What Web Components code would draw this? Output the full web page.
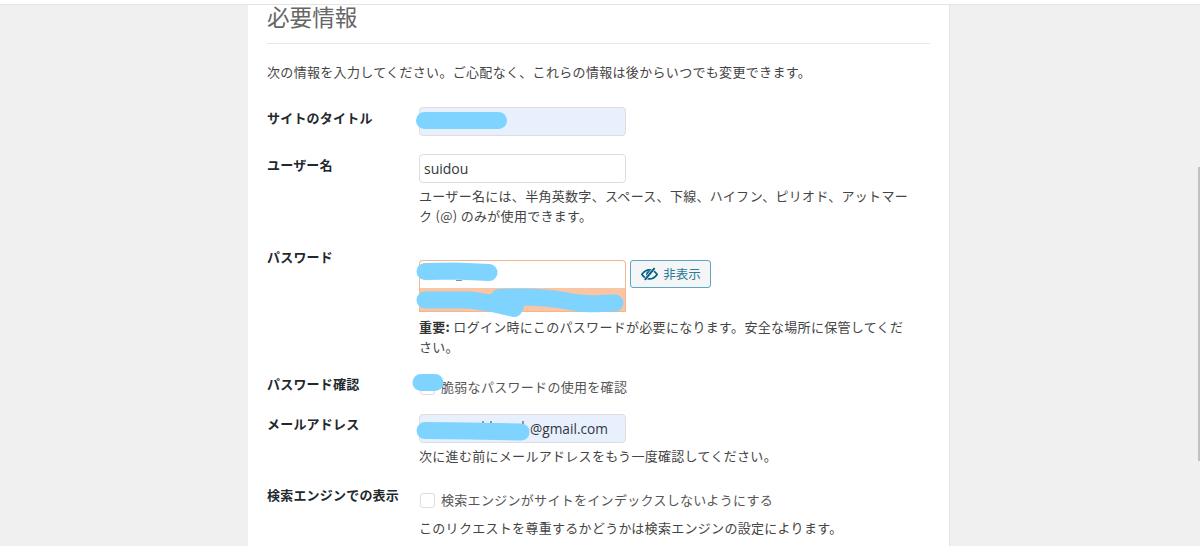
<!DOCTYPE html>
<html lang="ja"><head><meta charset="utf-8">
<style>
html,body{margin:0;height:546px;overflow:hidden;background:#f0f0f0}
body{font-family:"Noto Sans CJK JP","Open Sans",sans-serif;font-size:13px;color:#444;position:relative}
</style></head><body>
<template id="t-card"><style>
:host{display:block;width:701px;height:542px;margin-left:248px;background:#fff;border-right:1px solid #e4e4e4}
.in{padding:0 19px}
h1{margin:0;font-size:22.6px;font-weight:400;color:#666;line-height:23px;padding-top:1px;height:38px;border-bottom:1px solid #e8e8e8;width:663px}
p{margin:0;padding-top:18px;height:45px;line-height:19px;letter-spacing:.32px}
</style><div class="in"><h1>必要情報</h1><p>次の情報を入力してください。ご心配なく、これらの情報は後からいつでも変更できます。</p><slot></slot></div></template>

<template id="t-row"><style>
:host{display:grid;grid-template-columns:152px 1fr;align-items:start}
.l{font-weight:700;color:#23282d;line-height:20px;letter-spacing:.2px}
.c{width:494px;min-width:0}
</style><div class="l"><slot name="label"></slot></div><div class="c"><slot></slot></div></template>

<template id="t-field"><style>
:host{display:block;box-sizing:border-box;width:207px;height:29px;border:1px solid #ddd;border-radius:4px;background:#fff;padding:0 4px;font:14px/27px "Open Sans","Noto Sans CJK JP",sans-serif;color:#32373c;white-space:nowrap;overflow:hidden}
:host([fill]){background:#e8f0fe}
</style><slot></slot></template>

<template id="t-desc"><style>
:host{display:block;line-height:20px;letter-spacing:.3px;color:#444}
</style><slot></slot></template>

<template id="t-check"><style>
:host{display:flex;align-items:center;line-height:20px;letter-spacing:.3px;color:#555}
i{display:block;box-sizing:border-box;width:15px;height:15px;border:1px solid #ddd;border-radius:3px;background:#fff;margin:0 6px 0 1px;flex:none}
</style><i></i><slot></slot></template>

<template id="t-pass"><style>
:host{display:grid;grid-template-columns:207px auto;column-gap:4px;justify-content:start}
.b{box-sizing:border-box;width:207px;height:28px;border:1px solid #f5b58f;border-bottom:0;border-radius:4px 4px 0 0;background:#fff}
.s{grid-column:1;height:24px;background:#fbc4a3;border:1px solid #f5b58f;border-top:0;box-sizing:border-box}
button{grid-column:2;grid-row:1;box-sizing:border-box;width:81px;height:28px;border:1px solid #5fa5bd;border-radius:3px;background:#f3f5f6;color:#2b7a9a;font:12.5px/26px "Noto Sans CJK JP",sans-serif;padding:0 0 0 1px;display:flex;align-items:center;justify-content:center;gap:5px}
svg{width:17px;height:14px;flex:none}
</style><div class="b"></div>
<button><svg viewBox="0 0 20 16"><path d="M1 8.500C3.600 5 6.500 3.200 10 3.200s6.400 1.800 9 5.300c-2.600 3.500-5.500 5.300-9 5.300s-6.400-1.800-9-5.300z" fill="none" stroke="#016087" stroke-width="2"/><path d="M10 4.500a4 4 0 0 0-4 4c0 1.500.8 2.800 2 3.500l5-6a4 4 0 0 0-3-1.500z" fill="#016087"/><path d="M16 1 4.500 15" stroke="#fff" stroke-width="3.600"/><path d="M16 1 4.500 15" stroke="#016087" stroke-width="2.400"/></svg>非表示</button>
<div class="s"></div></template>

<template id="t-scribble"><style>
:host{display:block;position:absolute;left:0;top:0;width:1200px;height:546px;pointer-events:none}
svg{display:block}
</style><svg width="1200" height="546" viewBox="0 0 1200 546">
<path d="M456 280.500h6" stroke="#8a8f98" stroke-width="1"/>
<path d="M483 421v5M491 421v4M523 421v5" stroke="#555" stroke-width="1.200"/>
<g fill="none" stroke="#7fd3ff" stroke-linecap="round" stroke-linejoin="round">
<path d="M424.500 120.500L498.500 120.500" stroke-width="17"/>
<path d="M425 271.500L455 271L478 272L489 272.500" stroke-width="17"/>
<path d="M425 300L470 300L490 303L514 308.500" stroke-width="17"/>
<path d="M499 297.500C530 296 555 298 575 302.500C590 305 600 303 615 303" stroke-width="17"/>
<path d="M491 302L516 306" stroke-width="16"/>
<path d="M421 382.500L435 382.500" stroke-width="17"/>
<path d="M425 430.500L470 431L521 432" stroke-width="17"/>
</g></svg></template>

<template id="t-scroll"><style>
:host{display:block;position:absolute;right:0;top:167px;width:2px;height:294px;background:#c1c1c1}
</style></template>

<template id="t-top"><style>
:host{display:block;height:4px;background:#fff;border-bottom:1px solid #e4e4e4;margin-bottom:-1px;position:relative}
</style></template>

<script>
for (const [n,t] of [['wp-card','t-card'],['wp-row','t-row'],['wp-field','t-field'],['wp-desc','t-desc'],['wp-check','t-check'],['wp-pass','t-pass'],['wp-scribble','t-scribble'],['wp-scroll','t-scroll'],['wp-top','t-top']]) {
  customElements.define(n, class extends HTMLElement {
    constructor(){super();this.attachShadow({mode:'open'}).appendChild(document.getElementById(t).content.cloneNode(true));}
  });
}
</script>

<wp-top></wp-top>
<wp-card>
  <wp-row style="height:47px"><span slot="label" style="display:block;padding-top:1px">サイトのタイトル</span><wp-field fill></wp-field></wp-row>
  <wp-row style="height:106px"><span slot="label" style="display:block;margin-top:1px">ユーザー名</span><wp-field>suidou</wp-field><wp-desc style="margin-top:3px">ユーザー名には、半角英数字、スペース、下線、ハイフン、ピリオド、アットマーク (@) のみが使用できます。</wp-desc></wp-row>
  <wp-row style="height:113px"><span slot="label" style="display:block;margin-top:-13px">パスワード</span><wp-pass></wp-pass><wp-desc style="margin-top:5px"><b style="color:#333">重要:</b> ログイン時にこのパスワードが必要になります。安全な場所に保管してください。</wp-desc></wp-row>
  <wp-row style="height:41px"><span slot="label" style="display:block;margin-top:1px">パスワード確認</span><wp-check style="padding-top:4px">脆弱なパスワードの使用を確認</wp-check></wp-row>
  <wp-row style="height:75px"><span slot="label" style="display:block">メールアドレス</span><wp-field fill><span style="padding-left:106px;font-size:13.7px">@gmail.com</span></wp-field><wp-desc style="margin-top:3px">次に進む前にメールアドレスをもう一度確認してください。</wp-desc></wp-row>
  <wp-row><span slot="label" style="display:block;margin-top:-4px">検索エンジンでの表示</span><wp-check style="margin-top:1px">検索エンジンがサイトをインデックスしないようにする</wp-check><wp-desc style="margin-top:8px">このリクエストを尊重するかどうかは検索エンジンの設定によります。</wp-desc></wp-row>
</wp-card>
<wp-scribble></wp-scribble>
<wp-scroll></wp-scroll>
</body></html>
